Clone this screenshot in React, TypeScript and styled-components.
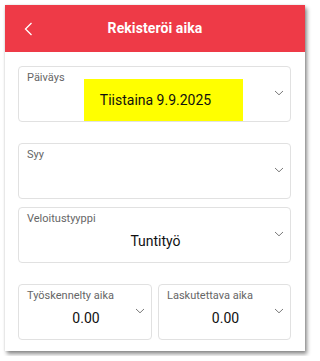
import styled, { createGlobalStyle } from 'styled-components';

const GlobalStyle = createGlobalStyle`
  body {
    margin: 0;
    background: #ffffff;
    font-family: Roboto, "Liberation Sans", sans-serif;
  }
`;

const Page = styled.div`
  padding: 5px;
`;

const Screen = styled.div`
  width: 300px;
  height: 346px;
  background: #ffffff;
  box-shadow: 2px 3px 4px rgba(0, 0, 0, 0.45), 0 0 2px rgba(0, 0, 0, 0.12);
  display: flex;
  flex-direction: column;
`;

const Header = styled.div`
  height: 47px;
  background-color: #ee3a47;
  display: grid;
  grid-template-columns: 40px 1fr 40px;
  align-items: center;
`;

const BackButton = styled.div`
  padding-left: 19px;
  display: flex;
  align-items: center;
`;

const Title = styled.div`
  color: #ffffff;
  font-size: 14px;
  font-weight: 700;
  letter-spacing: 0.1px;
  text-align: center;
  margin-top: -1px;
`;

const Content = styled.div`
  padding: 14px 14px 0 13px;
  display: flex;
  flex-direction: column;
  gap: 21px;
`;

const Group = styled.div`
  display: flex;
  flex-direction: column;
  gap: 8px;
`;

const Row = styled.div`
  display: grid;
  grid-template-columns: 134px 1fr;
  gap: 6px;
`;

const Field = styled.div`
  height: 56px;
  box-sizing: border-box;
  border: 1px solid #e1e1e1;
  border-radius: 4px;
  padding: 4px 6px 0 8px;
  display: grid;
  grid-template-columns: 1fr;
  grid-template-rows: 14px 20px;
  row-gap: 5px;
  align-content: start;
`;

const Label = styled.div`
  grid-row: 1;
  grid-column: 1;
  font-size: 11px;
  line-height: 14px;
  color: #666666;
  white-space: nowrap;
`;

const Value = styled.div`
  grid-row: 2;
  grid-column: 1;
  font-size: 14px;
  line-height: 20px;
  color: #111111;
  text-align: center;
`;

const Highlight = styled.span`
  display: inline-block;
  background: #ffff00;
  padding: 11px 32px 11px 16px;
  margin: -11px -32px -11px -16px;
  line-height: 20px;
`;

const Chevron = styled.div`
  grid-row: 1 / 3;
  grid-column: 1;
  justify-self: end;
  align-self: center;
  margin-top: 4px;
  display: flex;
`;

function DownIcon() {
  return (
    <svg width="10" height="6" viewBox="0 0 10 6">
      <path d="M1 1 L5 4.8 L9 1" fill="none" stroke="#7a7a7a" strokeWidth="1" />
    </svg>
  );
}

function BackIcon() {
  return (
    <svg width="9" height="14" viewBox="0 0 9 14">
      <path d="M7.5 1 L1.5 7 L7.5 13" fill="none" stroke="#ffffff" strokeWidth="1.3" />
    </svg>
  );
}

export default function App() {
  return (
    <>
      <GlobalStyle />
      <Page>
        <Screen>
          <Header>
            <BackButton>
              <BackIcon />
            </BackButton>
            <Title>Rekisteröi aika</Title>
            <div />
          </Header>
          <Content>
            <Field>
              <Label>Päiväys</Label>
              <Value>
                <Highlight>Tiistaina 9.9.2025</Highlight>
              </Value>
              <Chevron>
                <DownIcon />
              </Chevron>
            </Field>
            <Group>
              <Field>
                <Label>Syy</Label>
                <Value />
                <Chevron>
                  <DownIcon />
                </Chevron>
              </Field>
              <Field>
                <Label>Veloitustyyppi</Label>
                <Value>Tuntityö</Value>
                <Chevron>
                  <DownIcon />
                </Chevron>
              </Field>
            </Group>
            <Row>
              <Field>
                <Label>Työskennelty aika</Label>
                <Value>0.00</Value>
                <Chevron>
                  <DownIcon />
                </Chevron>
              </Field>
              <Field>
                <Label>Laskutettava aika</Label>
                <Value>0.00</Value>
                <Chevron>
                  <DownIcon />
                </Chevron>
              </Field>
            </Row>
          </Content>
        </Screen>
      </Page>
    </>
  );
}
